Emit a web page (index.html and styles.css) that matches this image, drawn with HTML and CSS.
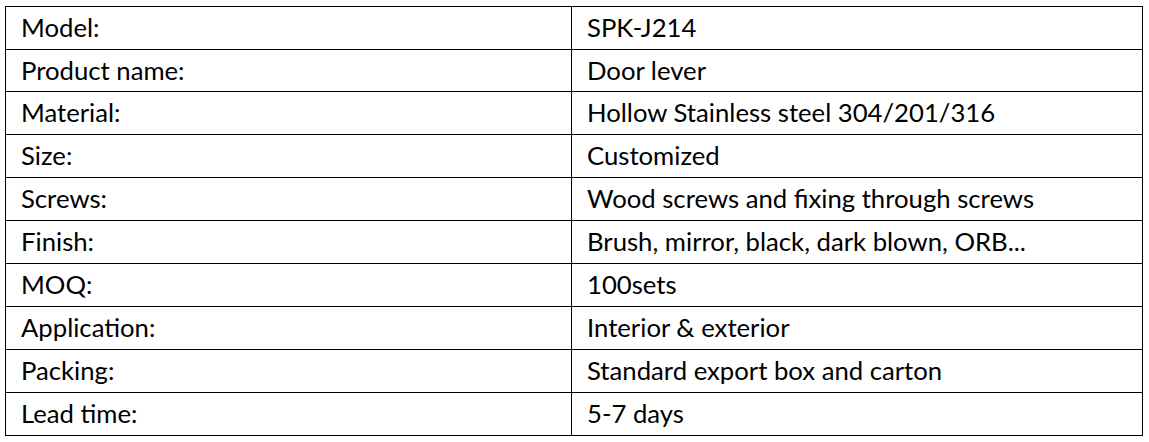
FILE: index.html
```html
<!DOCTYPE html>
<html>
<head>
<meta charset="utf-8">
<link rel="stylesheet" href="styles.css">
</head>
<body>
<table class="spec">
<tr><td class="k">Model:</td><td class="v">SPK-J214</td></tr>
<tr><td class="k">Product name:</td><td class="v">Door lever</td></tr>
<tr><td class="k">Material:</td><td class="v">Hollow Stainless steel 304/201/316</td></tr>
<tr><td class="k">Size:</td><td class="v">Customized</td></tr>
<tr><td class="k">Screws:</td><td class="v">Wood screws and fixing through screws</td></tr>
<tr><td class="k">Finish:</td><td class="v">Brush, mirror, black, dark blown, ORB...</td></tr>
<tr><td class="k">MOQ:</td><td class="v">100sets</td></tr>
<tr><td class="k">Application:</td><td class="v">Interior &amp; exterior</td></tr>
<tr><td class="k">Packing:</td><td class="v">Standard export box and carton</td></tr>
<tr><td class="k">Lead time:</td><td class="v">5-7 days</td></tr>
</table>
</body>
</html>
```
FILE: styles.css
```css
html, body { margin: 0; padding: 0; background: #fff; }
body { padding: 6px 0 0 5px; }
.spec {
  border-collapse: collapse;
  width: 1138px;
  table-layout: fixed;
  font-family: "Lato", "Liberation Sans", sans-serif;
  font-size: 25.7px;
  color: #000;
}
.spec td {
  border: 1px solid #000;
  height: 43px;
  padding: 0 0 0 15px;
  box-sizing: border-box;
  vertical-align: middle;
  line-height: 1;
}
.spec tr:nth-child(2) td { height: 42px; }
.spec td.k { width: 566px; }
```
